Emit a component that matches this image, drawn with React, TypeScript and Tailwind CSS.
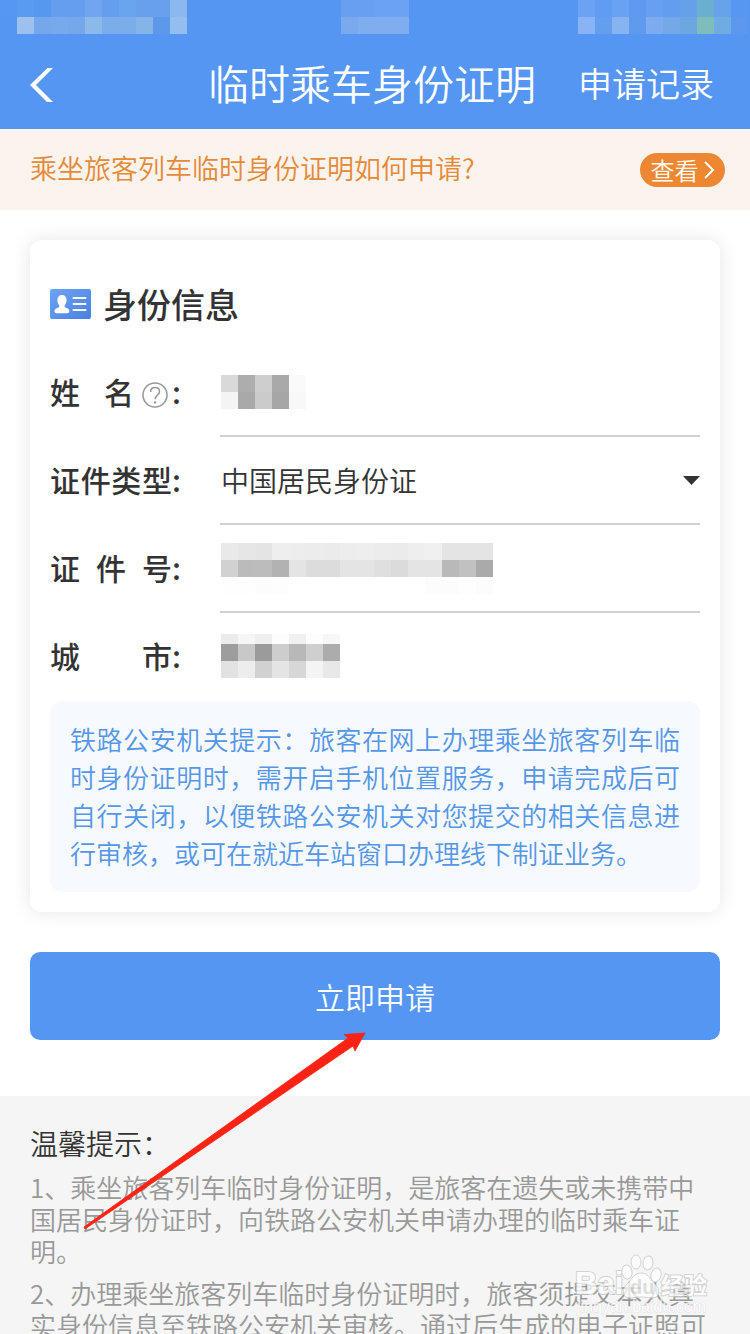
import React, { useState } from 'react';

const STATUS_LEFT = [
  ['#5598f3', '#5a9bf2', '#5598f0', '#659eee', '#659eee', '#71a5f0', '#659eee', '#68a5ee', '#68a0ee', '#68a0ee', '#8cb8f0'],
  ['#5596f3', '#9dc0ee', '#74a8ea', '#76aaec', '#74a8ea', '#8bb9e8', '#7badea', '#7badea', '#86b3e8', '#5e98ea', '#93beed'],
];
const STATUS_MIDDLE = [
  ['#689ff0', '#689ff0', '#6ba2f1', '#6ba2f1'],
  ['#7aa9ee', '#80adee', '#80adee', '#80adee'],
];
const STATUS_RIGHT = [
  ['#6ba2f3', '#609cf1', '#6aa2f3', '#5e9af0', '#689ff1', '#639df0', '#66a0e8', '#6aaed0', '#66a3ea', '#5797f1'],
  ['#89b3f4', '#649eee', '#88b3f1', '#5e9aee', '#7cabef', '#74a9e8', '#6da7e2', '#7fbcbc', '#70ace4', '#5b98ee'],
];
const NAME_MASK = [
  ['#d9d9d9', '#adadad', '#cecece', '#a9a9a9', '#fafafa'],
  ['#f4f4f4', '#a9a9a9', '#cbcbcb', '#a6a6a6', '#f8f8f8'],
];
const ID_MASK = [
  ['#e9e9e9', '#e6e6e6', '#e4e4e4', '#eeeeee', '#ededed', '#ececec', '#ebebeb', '#ededed', '#eeeeee', '#ececec', '#ebebeb', '#eeeeee', '#f0f0f0', '#e4e4e4', '#e4e4e4', '#e4e4e4'],
  ['#d1d1d1', '#bbbbbb', '#bcbcbc', '#b2b2b2', '#e4e4e4', '#dcdcdc', '#dcdcdc', '#e4e4e4', '#e4e4e4', '#dfdfdf', '#dbdbdb', '#e4e4e4', '#e4e4e4', '#b9b9b9', '#c1c1c1', '#aaaaaa'],
  ['#fefefe', '#fefefe', '#fcfcfc', '#fdfdfd', '#ffffff', '#ffffff', '#ffffff', '#ffffff', '#ffffff', '#ffffff', '#ffffff', '#ffffff', '#fcfcfc', '#fcfcfc', '#fefefe', '#fcfcfc'],
];
const CITY_MASK = [
  ['#ebebeb', '#f6f6f6', '#efefef', '#fcfcfc', '#f0f0f0', '#fdfdfd', '#f7f7f7'],
  ['#9d9d9d', '#c8c8c8', '#9b9b9b', '#cdcdcd', '#b8b8b8', '#cfcfcf', '#acacac'],
  ['#e2e2e2', '#ededed', '#d1d1d1', '#e4e4e4', '#d7d7d7', '#f4f4f4', '#e8e8e8'],
];

// `crop` hides the top pixels of the first row
const Mosaic: React.FC<{ rows: string[][]; crop?: number }> = ({ rows, crop = 0 }) => {
  const w = rows[0].length * 17;
  const h = rows.length * 17 - crop;
  return (
    <svg className="shrink-0" width={w} height={h} viewBox={`0 ${crop} ${w} ${h}`} shapeRendering="crispEdges" aria-hidden="true">
      {rows.map((row, y) => row.map((c, x) => (
        <rect key={`${x}-${y}`} x={x * 17} y={y * 17} width="17" height="17" fill={c} />
      )))}
    </svg>
  );
};

const IdCardIcon = () => (
  <svg width="41" height="30" viewBox="0 0 41 30" aria-hidden="true">
    <defs>
      <linearGradient id="idcard" x1="0" y1="0" x2="1" y2="1">
        <stop offset="0" stopColor="#6da4f6" />
        <stop offset="1" stopColor="#4a80e0" />
      </linearGradient>
    </defs>
    <rect width="41" height="30" rx="2" fill="url(#idcard)" />
    <path d="M12 6c3 0 4.600 2 4.600 5 0 2.300-.8 4-1.900 5.200-.4 1.600.2 2.200 1.800 2.800 2 .7 2.800 1.500 2.800 3.300 0 1.500-1 2-2.600 2H7.300c-1.700 0-2.800-.5-2.800-2 0-1.800.9-2.600 2.900-3.300 1.600-.6 2.200-1.200 1.800-2.800C8.100 15 7.400 13.300 7.400 11c0-3 1.600-5 4.600-5z" fill="#fff" />
    <path d="M23.500 9h12M23.500 15h12M23.500 21h12" stroke="#fff" strokeWidth="2" strokeLinecap="round" />
  </svg>
);

const Row: React.FC<{ id: string; chars: string[]; help?: boolean; last?: boolean; children: React.ReactNode }> = ({ id, chars, help, last, children }) => (
  <div className="flex h-[88px]">
    <div className="flex w-[170px] shrink-0 items-center pb-1 text-[30px] font-medium">
      <label htmlFor={id} className={`flex justify-between ${help ? 'w-[84px]' : 'w-[122px]'}`}>
        {chars.map((c) => <span key={c}>{c}</span>)}
      </label>
      {help && (
        <button aria-label="帮助" className="ml-2 mr-1 mt-2">
          <svg width="26" height="26" viewBox="0 0 26 26" fill="none" stroke="#999" strokeWidth="1.600">
            <circle cx="13" cy="13" r="12" />
            <path d="M8.600 10c0-2.700 1.900-4.500 4.500-4.500s4.400 1.700 4.400 4.100c0 3.500-4.300 3.700-4.300 7.600" />
            <circle cx="13.100" cy="20.400" r="1.200" fill="#999" stroke="none" />
          </svg>
        </button>
      )}
      <span>:</span>
    </div>
    <div className={`flex min-w-0 flex-1 items-center border-b-2 pl-px ${last ? 'border-transparent' : 'border-[#d2d2d2]'}`}>
      {children}
    </div>
  </div>
);

const Watermark = () => (
  <div className="pointer-events-none absolute right-[36px] bottom-4 opacity-75">
    <svg width="140" height="66" viewBox="0 0 140 66" aria-hidden="true" fill="#fff" stroke="#c8c8c8" strokeWidth="2">
      <g fontFamily='"Liberation Sans", "Noto Sans CJK SC", sans-serif' fontWeight="700">
        <text x="1" y="42" fontSize="31" paintOrder="stroke">Bai</text>
        <g strokeWidth="1">
          <ellipse cx="53" cy="20" rx="5" ry="7" transform="rotate(-8 53 20)" />
          <ellipse cx="62" cy="10" rx="5" ry="7" />
          <ellipse cx="74" cy="11" rx="5" ry="7" transform="rotate(8 74 11)" />
          <ellipse cx="82" cy="23" rx="5" ry="7" transform="rotate(15 82 23)" />
          <path d="M67 21c7 0 9 6 13 10 4 4 6 8 4 12-3 5-10 2-17 2s-14 3-17-2c-2-4 0-8 4-12 4-4 6-10 13-10z" />
        </g>
        <text x="56" y="42" fontSize="20" fill="#d6d6d6" stroke="none">du</text>
        <text x="87" y="42" fontSize="23" paintOrder="stroke">经验</text>
      </g>
      <text x="3" y="60" fontSize="16" fontFamily='"Liberation Sans", sans-serif' stroke="#dcdcdc" strokeWidth="1" paintOrder="stroke">jingyan.baidu.com</text>
    </svg>
  </div>
);

const App: React.FC = () => {
  const [cardType, setCardType] = useState('id');

  return (
    <div className="relative h-screen overflow-hidden bg-white font-['Noto_Sans_CJK_SC',sans-serif] font-[350] text-[#333]">
      {/* Header */}
      <header className="bg-[#5596f3] text-white">
        <div className="flex h-10 items-start">
          <Mosaic rows={STATUS_LEFT} />
          <div className="flex flex-1 justify-center pr-4">
            <Mosaic rows={STATUS_MIDDLE} />
          </div>
          <div className="flex w-[172px]">
            <Mosaic rows={STATUS_RIGHT} />
          </div>
        </div>
        <div className="grid h-[89px] grid-cols-[1fr_auto_1fr] items-center pr-9 pl-[30px]">
          <button aria-label="返回" className="justify-self-start">
            <svg width="24" height="36" viewBox="0 0 24 36" fill="#fff">
              <path d="M23 1H17.500L0 18l17 17h6L6 18z" />
            </svg>
          </button>
          <h1 className="pb-1 text-[41px] leading-none font-[350]">临时乘车身份证明</h1>
          <a href="#records" className="justify-self-end pb-1 text-[34px] leading-none whitespace-nowrap">申请记录</a>
        </div>
      </header>

      {/* How-to banner */}
      <div className="flex h-[81px] items-center justify-between bg-[#fbf3ee] pr-[25px] pl-[30px]">
        <p className="pb-1 text-[27px] leading-none text-[#e58a37]">乘坐旅客列车临时身份证明如何申请?</p>
        <button className="flex h-[34px] w-[85px] items-center justify-center gap-1 rounded-full bg-[#ee8732] text-[24px] leading-none text-white">
          查看
          <svg width="12" height="18" viewBox="0 0 12 18" fill="none" stroke="#fff" strokeWidth="2">
            <path d="m2 1 8 8-8 8" />
          </svg>
        </button>
      </div>

      <main className="px-[30px] pt-[30px]">
        {/* Identity card */}
        <section className="rounded-xl bg-white px-5 pb-5 shadow-[0_0_20px_rgba(0,0,0,0.1)]">
          <div className="flex h-[109px] items-center gap-3 pt-[18px]">
            <IdCardIcon />
            <h2 className="text-[34px] leading-none font-medium">身份信息</h2>
          </div>

          <Row id="name" chars={['姓', '名']} help>
            <output id="name"><Mosaic rows={NAME_MASK} /></output>
          </Row>
          <Row id="card-type" chars={['证', '件', '类', '型']}>
            <div className="relative flex w-full items-center">
              <select
                id="card-type"
                value={cardType}
                onChange={(e) => setCardType(e.target.value)}
                className="w-full appearance-none bg-transparent text-[28px]"
              >
                <option value="id">中国居民身份证</option>
              </select>
              <svg className="pointer-events-none absolute right-0" width="17" height="9" viewBox="0 0 17 9" aria-hidden="true">
                <path d="M0 0h17L8.500 9z" fill="#333" />
              </svg>
            </div>
          </Row>
          <Row id="card-no" chars={['证', '件', '号']}>
            <output id="card-no"><Mosaic rows={ID_MASK} /></output>
          </Row>
          <Row id="city" chars={['城', '市']} last>
            <output id="city"><Mosaic rows={CITY_MASK} crop={7} /></output>
          </Row>

          <p className="rounded-xl bg-[#f6fafe] px-5 pt-[19px] pb-5 text-justify text-[26px] leading-[38px] text-[#5596e8]">
            铁路公安机关提示：旅客在网上办理乘坐旅客列车临时身份证明时，需开启手机位置服务，申请完成后可自行关闭，以便铁路公安机关对您提交的相关信息进行审核，或可在就近车站窗口办理线下制证业务。
          </p>
        </section>

        {/* Submit */}
        <div className="relative mt-10">
          <button className="h-[88px] w-full rounded-[10px] bg-[#5596f3] text-[30px] text-white">立即申请</button>
          <svg className="pointer-events-none absolute top-20 left-[53px] z-10" width="284" height="198" viewBox="0 0 284 198" aria-hidden="true">
            <path d="M282 1 261 2.500l4 3.500L1 195l1 2L270 14l2 5z" fill="#fd2314" stroke="#fd2314" strokeWidth=".8" />
          </svg>
        </div>
      </main>

      {/* Tips */}
      <section className="mt-14 bg-[#f5f5f5] px-[30px] pt-[27px] pb-10">
        <h3 className="text-[28px] leading-10 font-[350]">温馨提示：</h3>
        <div className="mt-2 space-y-[10px] text-[26px] leading-8 whitespace-nowrap text-[#999]">
          <p>
            1、乘坐旅客列车临时身份证明，是旅客在遗失或未携带中<br />
            国居民身份证时，向铁路公安机关申请办理的临时乘车证<br />
            明。
          </p>
          <p>
            2、办理乘坐旅客列车临时身份证明时，旅客须提交本人真<br />
            实身份信息至铁路公安机关审核。通过后生成的电子证照可
          </p>
        </div>
      </section>

      <Watermark />
    </div>
  );
};

export default App;
